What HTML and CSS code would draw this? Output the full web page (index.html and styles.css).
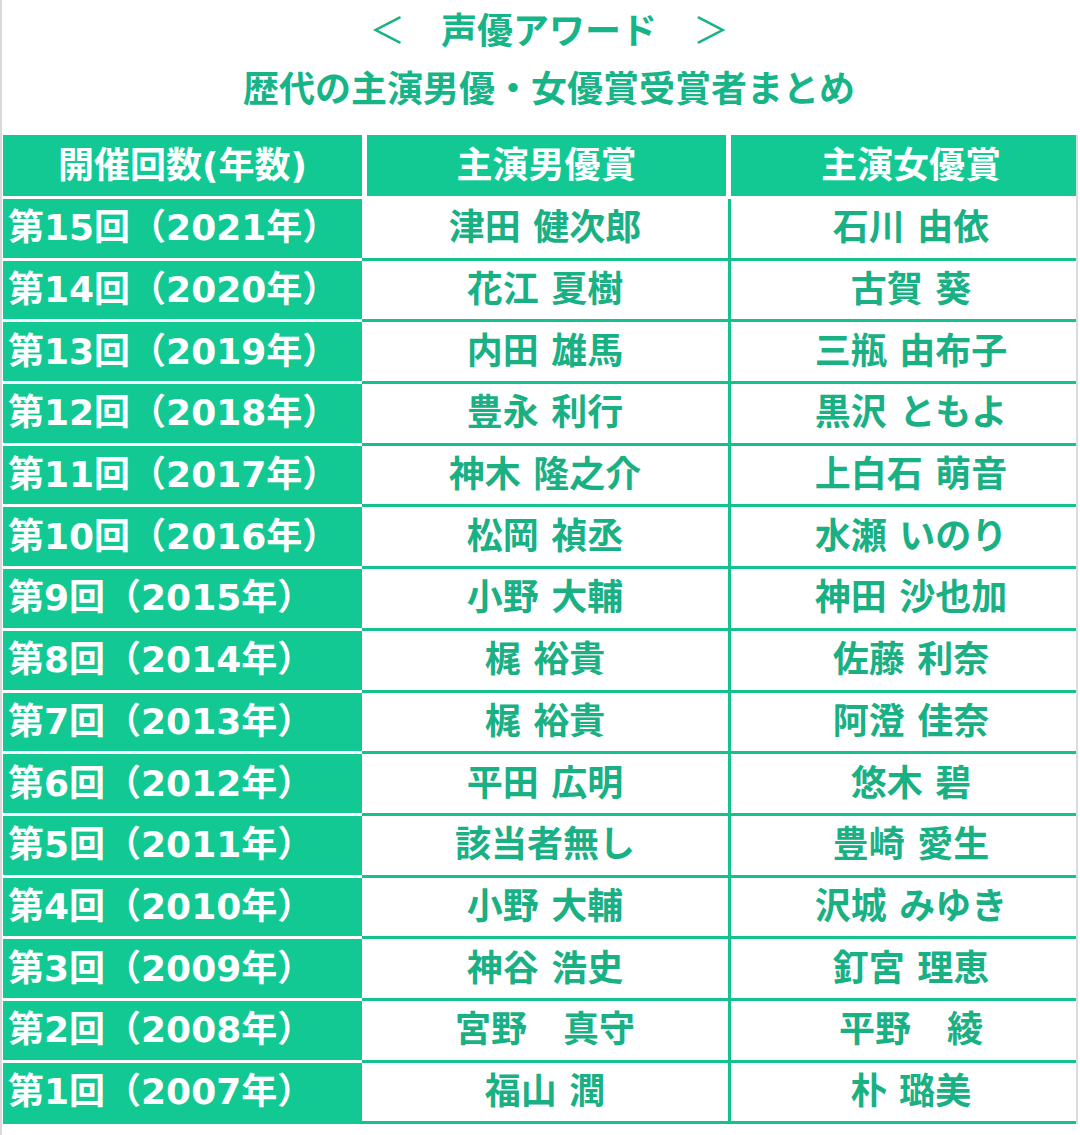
FILE: index.html
```html
<!DOCTYPE html>
<html lang="ja">
<head>
<meta charset="utf-8">
<title>声優アワード 歴代の主演男優・女優賞受賞者まとめ</title>
<link rel="stylesheet" href="styles.css">
</head>
<body>
<div class="page">
  <header class="title">
    <p class="title-sub"><span class="bracket">＜</span>　声優アワード　<span class="bracket">＞</span></p>
    <h1 class="title-main">歴代の主演男優・女優賞受賞者まとめ</h1>
  </header>
  <div class="table-wrap">
    <div class="award-table">
      <div class="head">開催回数(年数)</div>
      <div class="head head-mid">主演男優賞</div>
      <div class="head">主演女優賞</div>

      <div class="year">第15回（2021年）</div><div class="name male">津田 健次郎</div><div class="name">石川 由依</div>
      <div class="year">第14回（2020年）</div><div class="name male">花江 夏樹</div><div class="name">古賀 葵</div>
      <div class="year">第13回（2019年）</div><div class="name male">内田 雄馬</div><div class="name">三瓶 由布子</div>
      <div class="year">第12回（2018年）</div><div class="name male">豊永 利行</div><div class="name">黒沢 ともよ</div>
      <div class="year">第11回（2017年）</div><div class="name male">神木 隆之介</div><div class="name">上白石 萌音</div>
      <div class="year">第10回（2016年）</div><div class="name male">松岡 禎丞</div><div class="name">水瀬 いのり</div>
      <div class="year">第9回（2015年）</div><div class="name male">小野 大輔</div><div class="name">神田 沙也加</div>
      <div class="year">第8回（2014年）</div><div class="name male">梶 裕貴</div><div class="name">佐藤 利奈</div>
      <div class="year">第7回（2013年）</div><div class="name male">梶 裕貴</div><div class="name">阿澄 佳奈</div>
      <div class="year">第6回（2012年）</div><div class="name male">平田 広明</div><div class="name">悠木 碧</div>
      <div class="year">第5回（2011年）</div><div class="name male">該当者無し</div><div class="name">豊崎 愛生</div>
      <div class="year">第4回（2010年）</div><div class="name male">小野 大輔</div><div class="name">沢城 みゆき</div>
      <div class="year">第3回（2009年）</div><div class="name male">神谷 浩史</div><div class="name">釘宮 理恵</div>
      <div class="year">第2回（2008年）</div><div class="name male">宮野　真守</div><div class="name">平野　綾</div>
      <div class="year last">第1回（2007年）</div><div class="name male">福山 潤</div><div class="name">朴 璐美</div>
    </div>
  </div>
</div>
</body>
</html>
```
FILE: styles.css
```css
html, body {
  margin: 0;
  padding: 0;
  background: #ffffff;
}

body {
  font-family: "Noto Sans CJK JP", "Noto Sans", sans-serif;
}

.page {
  width: 1078px;
  min-height: 1135px;
  border-left: 2px solid #d9d9d9;
  box-sizing: border-box;
  padding-left: 1px;
}

.title {
  padding: 0 0 0 17px;
  margin-bottom: 19px;
  text-align: center;
  color: #17b487;
}

.title-sub,
.title-main {
  margin: 0;
  font-size: 36px;
  font-weight: 700;
}

.title-sub {
  line-height: 56px;
}

.title-main {
  line-height: 60px;
}

.bracket {
  font-weight: 400;
}

.table-wrap {
  width: 1073px;
  overflow: hidden;
  border-right: 2px solid #dcdcdc;
}

.award-table {
  display: grid;
  grid-template-columns: 359px 369px 360px;
  grid-template-rows: 64px repeat(15, 61.7px);
  width: 1088px;
  font-family: "DejaVu Sans", "Noto Sans CJK JP", sans-serif;
  font-size: 36px;
  font-weight: 700;
}

.head,
.year,
.name {
  display: flex;
  align-items: center;
  justify-content: center;
  box-sizing: border-box;
  white-space: pre;
  line-height: 1;
}

.head {
  background: #12c994;
  color: #ffffff;
  border-bottom: 3px solid #ffffff;
}

.head-mid {
  border-left: 5px solid #ffffff;
  border-right: 5px solid #ffffff;
}

.year {
  justify-content: flex-start;
  padding-left: 5px;
  background: #12c994;
  color: #ffffff;
  border-bottom: 3px solid #ffffff;
}

.year.last {
  border-bottom-color: #12c994;
}

.name {
  background: #ffffff;
  color: #19b084;
  border-bottom: 3px solid #14c18f;
}

.name.male {
  border-right: 3px solid #14c18f;
}
```
